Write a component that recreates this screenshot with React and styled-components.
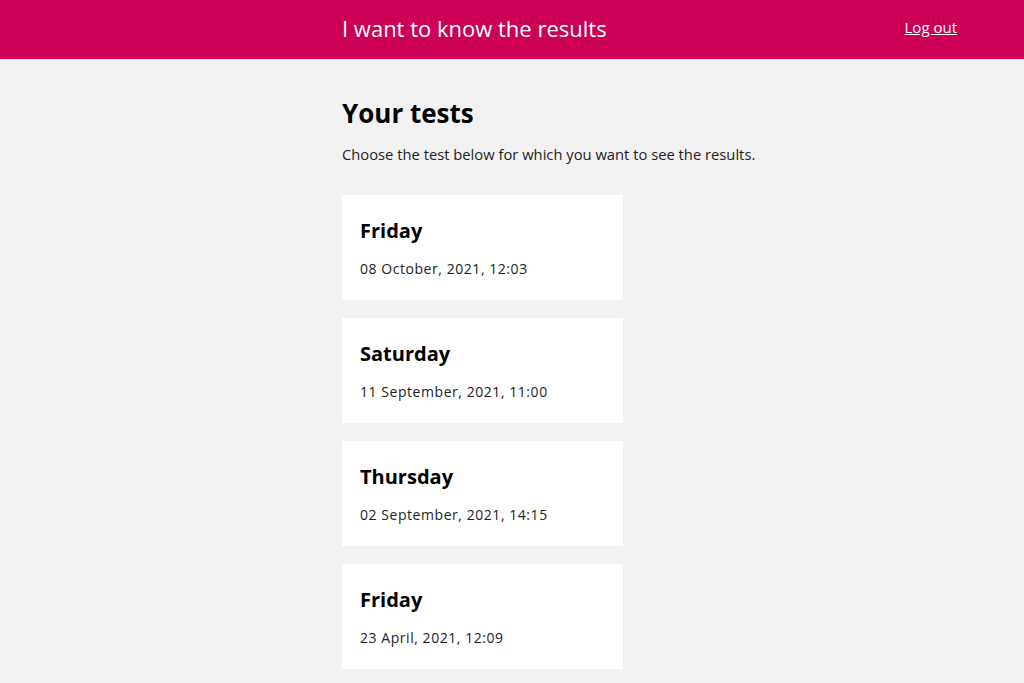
import styled, { createGlobalStyle } from "styled-components";

const GlobalStyle = createGlobalStyle`
  html, body {
    margin: 0;
    padding: 0;
    background: #f2f2f2;
    font-family: "Open Sans", "Noto Sans", sans-serif;
  }
`;

const tests = [
  { day: "Friday", date: "08 October, 2021, 12:03" },
  { day: "Saturday", date: "11 September, 2021, 11:00" },
  { day: "Thursday", date: "02 September, 2021, 14:15" },
  { day: "Friday", date: "23 April, 2021, 12:09" },
];

export default function App() {
  return (
    <>
      <GlobalStyle />
      <Header>
        <HeaderInner>
          <Title>I want to know the results</Title>
          <LogOut href="#">Log out</LogOut>
        </HeaderInner>
      </Header>
      <Main>
        <Content>
          <Heading>Your tests</Heading>
          <Intro>Choose the test below for which you want to see the results.</Intro>
          <List>
            {tests.map((t, i) => (
              <Card key={i}>
                <Day>{t.day}</Day>
                <DateText>{t.date}</DateText>
              </Card>
            ))}
          </List>
        </Content>
      </Main>
    </>
  );
}

const Header = styled.header`
  background: #cc0055;
  height: 59px;
  display: grid;
  grid-template-columns: 342px 1fr;
`;
const HeaderInner = styled.div`
  grid-column: 2;
  display: flex;
  align-items: center;
  justify-content: space-between;
  padding-right: 67px;
`;
const Title = styled.h1`
  margin: 0 0 3px;
  font-size: 22px;
  font-weight: 400;
  color: #ffffff;
`;
const LogOut = styled.a`
  margin-bottom: 6px;
  color: #ffffff;
  font-size: 15px;
  text-decoration: underline;
`;
const Main = styled.main`
  display: grid;
  grid-template-columns: 342px 1fr;
`;
const Content = styled.div`
  grid-column: 2;
  padding-top: 36px;
`;
const Heading = styled.h2`
  margin: 0;
  font-size: 26px;
  font-weight: 700;
  color: #000;
  line-height: 36px;
`;
const Intro = styled.p`
  margin: 13px 0 0;
  font-size: 14.75px;
  color: #222;
  line-height: 20px;
`;
const List = styled.div`
  margin-top: 31px;
  display: flex;
  flex-direction: column;
  gap: 18px;
`;
const Card = styled.div`
  width: 281px;
  height: 105px;
  box-sizing: border-box;
  background: #ffffff;
  padding: 23px 18px;
`;
const Day = styled.div`
  font-size: 20px;
  font-weight: 700;
  color: #000;
  line-height: 26px;
`;
const DateText = styled.div`
  margin-top: 15px;
  font-size: 14px;
  letter-spacing: 0.55px;
  color: #222;
  line-height: 20px;
`;
